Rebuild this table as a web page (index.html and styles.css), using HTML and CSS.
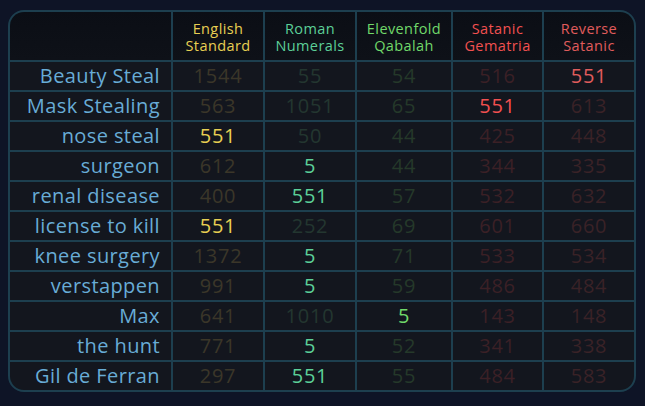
FILE: index.html
```html
<!DOCTYPE html>
<html>
<head>
<meta charset="utf-8">
<link rel="stylesheet" href="styles.css">
</head>
<body>
<div class="grid">
  <div class="hd"></div>
  <div class="hd c-en"><span>English</span><span>Standard</span></div>
  <div class="hd c-ro"><span>Roman</span><span>Numerals</span></div>
  <div class="hd c-el"><span>Elevenfold</span><span>Qabalah</span></div>
  <div class="hd c-sa"><span>Satanic</span><span>Gematria</span></div>
  <div class="hd c-re"><span>Reverse</span><span>Satanic</span></div>

  <div class="lb">Beauty Steal</div>
  <div class="v c-en dim">1544</div><div class="v c-ro dim">55</div><div class="v c-el dim">54</div><div class="v c-sa dim">516</div><div class="v c-re">551</div>

  <div class="lb">Mask Stealing</div>
  <div class="v c-en dim">563</div><div class="v c-ro dim">1051</div><div class="v c-el dim">65</div><div class="v c-sa">551</div><div class="v c-re dim">613</div>

  <div class="lb">nose steal</div>
  <div class="v c-en">551</div><div class="v c-ro dim">50</div><div class="v c-el dim">44</div><div class="v c-sa dim">425</div><div class="v c-re dim">448</div>

  <div class="lb">surgeon</div>
  <div class="v c-en dim">612</div><div class="v c-ro">5</div><div class="v c-el dim">44</div><div class="v c-sa dim">344</div><div class="v c-re dim">335</div>

  <div class="lb">renal disease</div>
  <div class="v c-en dim">400</div><div class="v c-ro">551</div><div class="v c-el dim">57</div><div class="v c-sa dim">532</div><div class="v c-re dim">632</div>

  <div class="lb">license to kill</div>
  <div class="v c-en">551</div><div class="v c-ro dim">252</div><div class="v c-el dim">69</div><div class="v c-sa dim">601</div><div class="v c-re dim">660</div>

  <div class="lb">knee surgery</div>
  <div class="v c-en dim">1372</div><div class="v c-ro">5</div><div class="v c-el dim">71</div><div class="v c-sa dim">533</div><div class="v c-re dim">534</div>

  <div class="lb">verstappen</div>
  <div class="v c-en dim">991</div><div class="v c-ro">5</div><div class="v c-el dim">59</div><div class="v c-sa dim">486</div><div class="v c-re dim">484</div>

  <div class="lb">Max</div>
  <div class="v c-en dim">641</div><div class="v c-ro dim">1010</div><div class="v c-el">5</div><div class="v c-sa dim">143</div><div class="v c-re dim">148</div>

  <div class="lb">the hunt</div>
  <div class="v c-en dim">771</div><div class="v c-ro">5</div><div class="v c-el dim">52</div><div class="v c-sa dim">341</div><div class="v c-re dim">338</div>

  <div class="lb">Gil de Ferran</div>
  <div class="v c-en dim">297</div><div class="v c-ro">551</div><div class="v c-el dim">55</div><div class="v c-sa dim">484</div><div class="v c-re dim">583</div>
</div>
</body>
</html>
```
FILE: styles.css
```css
html, body {
  margin: 0;
  background: #0e1426;
}
body {
  padding: 10px 9px 0 8px;
  font-family: "Open Sans", "DejaVu Sans", sans-serif;
}
.grid {
  display: grid;
  grid-template-columns: 161px 90px 90px 94px 89px 90px;
  grid-template-rows: 48px repeat(11, 28px);
  gap: 2px;
  width: 624px;
  border: 2px solid #1d3f4f;
  border-radius: 16px;
  overflow: hidden;
  background: #1d3f4f;
}
.hd {
  background: linear-gradient(#0b0e15, #0e1118);
  display: flex;
  flex-direction: column;
  align-items: center;
  justify-content: center;
  text-align: center;
  font-size: 14.5px;
  line-height: 17px;
  letter-spacing: 0.4px;
  padding-top: 1px;
}
.hd span {
  display: block;
  height: 17px;
}
.lb {
  background: #13161e;
  color: #68acd6;
  font-size: 20px;
  letter-spacing: 0.4px;
  text-align: right;
  padding-right: 11px;
  line-height: 28px;
}
.v {
  background: #13161e;
  text-align: center;
  font-size: 20px;
  letter-spacing: 0.8px;
  line-height: 28px;
}
.c-en { color: #e8cf52; }
.c-ro { color: #5ccf98; }
.c-el { color: #70d86a; }
.c-sa { color: #f25050; }
.c-re { color: #e05c5c; }
.v.dim.c-en { color: #3b3629; }
.v.dim.c-ro { color: #233630; }
.v.dim.c-el { color: #25392a; }
.v.dim.c-sa { color: #3b2026; }
.v.dim.c-re { color: #3a2227; }
```
